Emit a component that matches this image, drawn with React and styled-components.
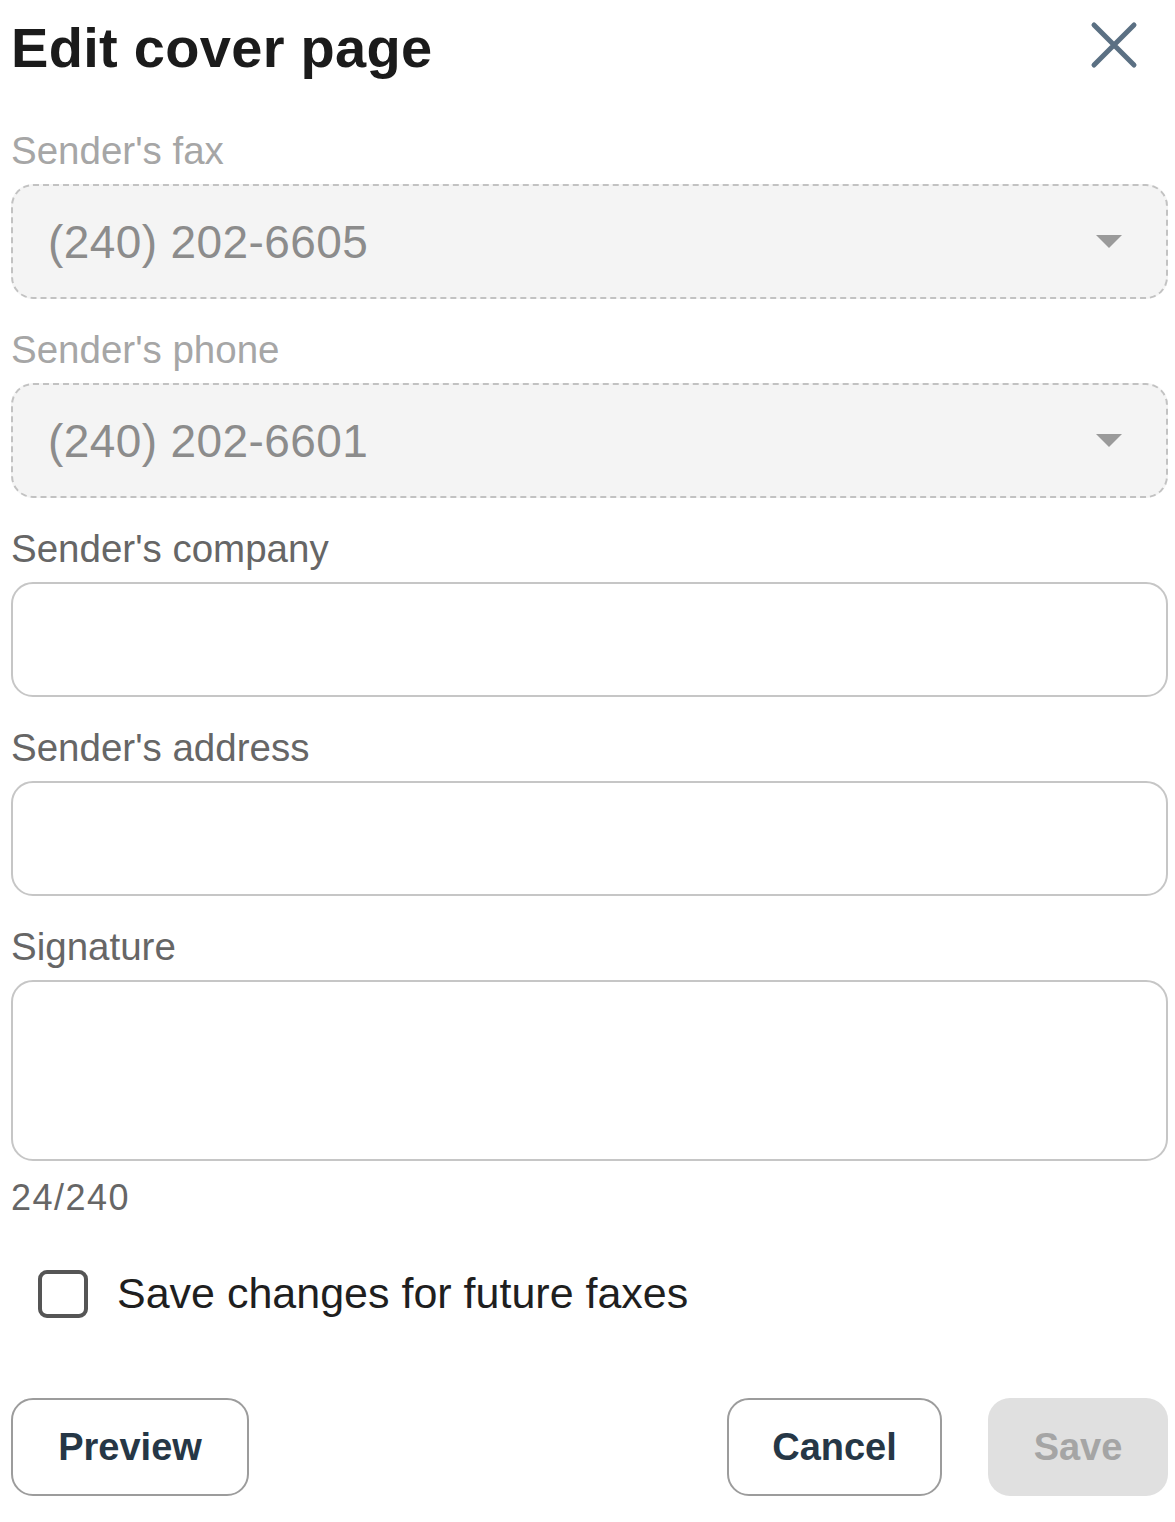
import React from 'react'
import styled, { createGlobalStyle } from 'styled-components'

const GlobalStyle = createGlobalStyle`
	body {
		margin: 0;
		background: #fff;
		font-family: 'Liberation Sans', Arial, sans-serif;
	}
`

const Dialog = styled.div`
	box-sizing: border-box;
	width: 1175px;
	padding: 14px 7px 20px 11px;
`

const Header = styled.div`
	display: flex;
	align-items: center;
	justify-content: space-between;
	margin-bottom: 47px;
`

const Title = styled.h1`
	margin: 0;
	font-size: 56px;
	line-height: 67px;
	font-weight: 700;
	color: #1b1b1b;
	letter-spacing: 0.3px;
`

const CloseButton = styled.button`
	display: flex;
	border: 0;
	background: none;
	padding: 0;
	margin: 0 30px 5px 0;
	color: #5b7083;
	cursor: pointer;
`

const Field = styled.div`
	display: flex;
	flex-direction: column;
	gap: 10px;
	& + & {
		margin-top: 28px;
	}
`

const Label = styled.label`
	font-size: 38.5px;
	line-height: 46px;
	color: ${(p) => (p.disabled ? '#a6a6a6' : '#666')};
`

const SelectBox = styled.div`
	box-sizing: border-box;
	height: 115px;
	display: flex;
	align-items: center;
	justify-content: space-between;
	padding: 0 44px 0 35px;
	border: 2px dashed #c2c2c2;
	border-radius: 22px;
	background: #f4f4f4;
`

const SelectValue = styled.span`
	font-size: 46px;
	letter-spacing: 0.4px;
	color: #8c8c8c;
`

const Caret = styled.span`
	width: 0;
	height: 0;
	border-left: 13px solid transparent;
	border-right: 13px solid transparent;
	border-top: 13px solid #9a9a9a;
`

const Input = styled.div`
	box-sizing: border-box;
	height: ${(p) => p.h || 115}px;
	border: 2px solid #c6c6c6;
	border-radius: 22px;
	background: #fff;
`

const Counter = styled.div`
	margin-top: 15px;
	font-size: 36px;
	line-height: 44px;
	letter-spacing: 1.5px;
	color: #666;
`

const CheckRow = styled.label`
	display: flex;
	align-items: center;
	gap: 29px;
	margin-top: 49px;
	padding-left: 27px;
	font-size: 43px;
	color: #1f1f1f;
`

const Box = styled.span`
	box-sizing: border-box;
	width: 50px;
	height: 48px;
	border: 4px solid #555;
	border-radius: 9px;
`

const Footer = styled.div`
	display: flex;
	align-items: center;
	justify-content: space-between;
	margin-top: 80px;
`

const RightGroup = styled.div`
	display: flex;
	gap: 46px;
`

const Button = styled.button`
	box-sizing: border-box;
	width: ${(p) => p.w}px;
	height: 98px;
	border-radius: 22px;
	font-family: inherit;
	font-size: 38px;
	font-weight: 700;
	border: ${(p) => (p.disabled ? '0' : '2px solid #9c9c9c')};
	background: ${(p) => (p.disabled ? '#e0e0e0' : '#fff')};
	color: ${(p) => (p.disabled ? '#a5a5a5' : '#263746')};
`

function SelectField({ label, value }) {
	return (
		<Field>
			<Label disabled>{label}</Label>
			<SelectBox>
				<SelectValue>{value}</SelectValue>
				<Caret />
			</SelectBox>
		</Field>
	)
}

function TextField({ label, h }) {
	return (
		<Field>
			<Label>{label}</Label>
			<Input h={h} />
		</Field>
	)
}

export default function App() {
	return (
		<>
			<GlobalStyle />
			<Dialog>
				<Header>
					<Title>Edit cover page</Title>
					<CloseButton aria-label='Close'>
						<svg width='48' height='50' viewBox='0 0 48 50' fill='none'>
							<path
								d='M4 5 L44 45 M44 5 L4 45'
								stroke='currentColor'
								strokeWidth='5'
								strokeLinecap='round'
							/>
						</svg>
					</CloseButton>
				</Header>

				<div>
					<SelectField label="Sender's fax" value='(240) 202-6605' />
					<SelectField label="Sender's phone" value='(240) 202-6601' />
					<TextField label="Sender's company" />
					<TextField label="Sender's address" />
					<TextField label='Signature' h={181} />
				</div>
				<Counter>24/240</Counter>

				<CheckRow>
					<Box />
					Save changes for future faxes
				</CheckRow>

				<Footer>
					<Button w={238}>Preview</Button>
					<RightGroup>
						<Button w={215}>Cancel</Button>
						<Button w={180} disabled>
							Save
						</Button>
					</RightGroup>
				</Footer>
			</Dialog>
		</>
	)
}
